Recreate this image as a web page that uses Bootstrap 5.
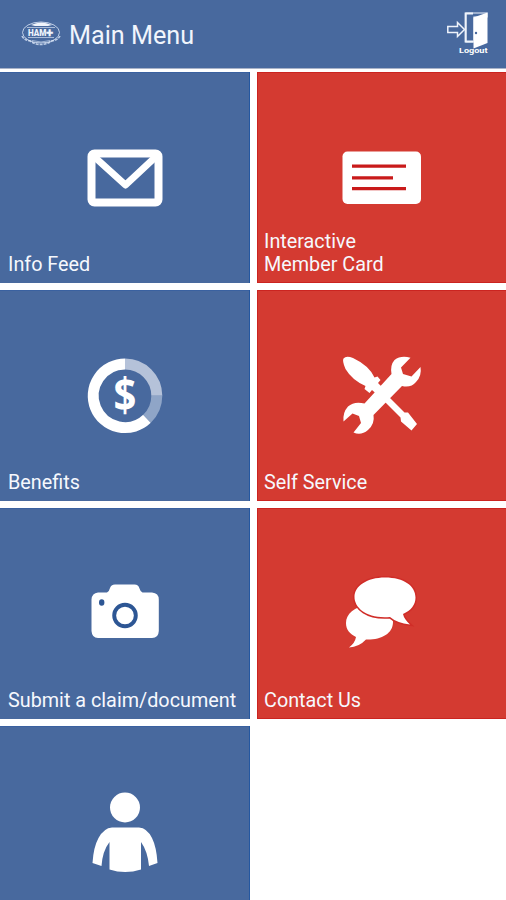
<!DOCTYPE html>
<html lang="en">
<head>
<meta charset="utf-8">
<meta name="viewport" content="width=device-width, initial-scale=1">
<title>Main Menu</title>
<link href="https://cdn.jsdelivr.net/npm/bootstrap@5.3.0/dist/css/bootstrap.min.css" rel="stylesheet">
<style>
body{font-family:Roboto,"Liberation Sans",sans-serif;background:#fff;height:900px;overflow:hidden}
.topbar{height:69px;background:#48699e;border-bottom:1px solid #a9b3c8;padding:0 16px 0 20px}
.topbar h1{font-size:25.2px;line-height:30px;color:#f1f5fc;margin:4px 0 0 7px}
.menu-grid{display:grid;grid-template-columns:250px 249px;grid-auto-rows:211px;gap:7px;margin-top:3px}
.tile{color:#f6f8fd;font-size:19.8px;line-height:23px;padding:55px 0 7px 7px}
.tile:hover{color:#fff}
.tile svg{margin-left:68px;flex:none}
.tile-blue{background:#48699e;box-shadow:inset -1px 0 #2457a0,inset 0 1px #3a61a0}
.tile-blue span{padding-left:1px}
.tile-red{background:#d43a31;box-shadow:inset 1px 1px #cb2420,inset 0 -1px #cb2420}
</style>
</head>
<body>
<header class="topbar d-flex align-items-center">
  <svg width="42" height="30" viewBox="20 20 42 30" fill="none" stroke="#dbe6f7" aria-hidden="true">
    <ellipse cx="41" cy="33.500" rx="18.500" ry="10.500" stroke-width="1" opacity=".8"/>
    <path d="M31 26Q41 21 52 26L48 27H35Z" fill="#f1f5fc" stroke="none"/>
    <path d="M27 28.500H55M28 38.500H54" opacity=".65"/>
    <text x="28" y="37" font-family="Roboto, sans-serif" font-weight="900" font-size="8.500" textLength="26" lengthAdjust="spacingAndGlyphs" fill="#edf3fc" stroke="none">HAM✚</text>
    <path d="M22 37Q24 41 30 42Q41 49 52 42Q58 41 60 37" stroke-width="1.600" stroke-dasharray="3 1" opacity=".8"/>
    <path d="M32 41.500Q41 44.500 50 41.500" opacity=".6"/>
  </svg>
  <h1 class="fw-normal">Main Menu</h1>
  <a href="#" class="ms-auto d-block" aria-label="Logout">
    <svg class="d-block" width="46" height="50" viewBox="444 9 46 50">
      <path d="M473 13.500H465.500V41.500H473" fill="none" stroke="#eef3fb" stroke-width="1.800"/>
      <path d="M466 13H487V17H474V42H466Z" fill="none" stroke="#eef3fb" stroke-width="1.200"/>
      <path d="M473.500 17.500L487.500 12.500V43L473.500 48.500Z" fill="#fff"/>
      <circle cx="476" cy="33" r="1.200" fill="#48699e"/>
      <path d="M447.800 26.500H457.500V22.500L464.500 29.500L457.500 36.500V32.500H447.800Z" fill="#48699e" stroke="#eef3fb" stroke-width="1.500"/>
      <text x="459" y="53" font-family="Roboto, sans-serif" font-size="7.500" font-weight="700" textLength="28.500" lengthAdjust="spacingAndGlyphs" fill="#fff">Logout</text>
    </svg>
  </a>
</header>
<main class="menu-grid">
  <a href="#" class="tile tile-blue d-flex flex-column text-decoration-none">
    <svg width="100" height="100" viewBox="75 127 100 100" fill="none" stroke="#fff">
      <rect x="91.500" y="153.500" width="67" height="49" rx="3" stroke-width="8"/>
      <path d="M94 156.500L125.500 185L156 156.500" stroke-width="7" stroke-linejoin="round"/>
    </svg>
    <span class="mt-auto">Info Feed</span>
  </a>
  <a href="#" class="tile tile-red d-flex flex-column text-decoration-none">
    <svg width="100" height="100" viewBox="332 127 100 100">
      <rect x="342.500" y="151.500" width="78.500" height="52.500" rx="5" fill="#fff"/>
      <path d="M352 166.200H406M352 177.800H393M352 188.700H406" stroke="#c91a1a" stroke-width="3.300"/>
    </svg>
    <span class="mt-auto">Interactive<br>Member Card</span>
  </a>
  <a href="#" class="tile tile-blue d-flex flex-column text-decoration-none">
    <svg width="100" height="100" viewBox="75 345 100 100">
      <g fill="none" stroke-width="11">
        <path d="M125 364A31.800 31.800 0 1 0 147 418.800" stroke="#fff"/>
        <path d="M125 364A31.800 31.800 0 0 1 156.800 395.800" stroke="#b5c2d9"/>
        <path d="M156.800 395.800A31.800 31.800 0 0 1 147 418.800" stroke="#8fa5c7"/>
      </g>
      <text transform="translate(125 412.200) scale(1 1.180)" text-anchor="middle" font-family="Open Sans, sans-serif" font-weight="700" font-size="40" fill="#fff">$</text>
    </svg>
    <span class="mt-auto">Benefits</span>
  </a>
  <a href="#" class="tile tile-red d-flex flex-column text-decoration-none">
    <svg width="100" height="100" viewBox="332 345 100 100" fill="#fff">
      <path d="M343.500 358.500Q346 355.500 353 358Q369 365.500 374.500 377.500L377.500 376.500L380.500 380L378 383L384 389L377.500 395L372 390L369.500 393L364.500 389L365.500 386Q352 380 345.500 369Q342 361 343.500 358.500Z"/>
      <path d="M384 401L388.500 396.500L404.500 412.500L408 412.500L417 424L411.500 430.500L401 421.500L400.500 417.500Z"/>
      <path d="M410.500 357.800Q401 355 394.500 360Q390 365 391.500 374L364.500 403.500Q354 401 348 406.500Q342.500 412.500 343.500 421.500L352.500 413.500L359 416L361 423L353.500 432.500Q361 436 368 430Q375 424 373.500 415L402 386Q411 388 416 382Q422 376 420.500 367L411.500 376.500L403 374L401 367.500Z"/>
    </svg>
    <span class="mt-auto">Self Service</span>
  </a>
  <a href="#" class="tile tile-blue d-flex flex-column text-decoration-none">
    <svg width="100" height="100" viewBox="75 563 100 100">
      <path d="M98 592.500H107Q109 592 109.800 588.500Q111 584.500 115 584.500H134.500Q138.500 584.500 139.500 588.500Q140.500 592 142.500 592.500H152Q158.800 593 158.800 599.500V631Q158.500 638 152 638H98Q92 638 91.500 631V599.500Q92 593 98 592.500Z" fill="#fff"/>
      <circle cx="125" cy="615.500" r="10.800" fill="none" stroke="#2d5694" stroke-width="3.900"/>
      <ellipse cx="101.700" cy="602.500" rx="2.700" ry="3.200" fill="#2d5694"/>
    </svg>
    <span class="mt-auto">Submit a claim/document</span>
  </a>
  <a href="#" class="tile tile-red d-flex flex-column text-decoration-none">
    <svg width="100" height="100" viewBox="332 563 100 100" fill="#fff">
      <path d="M369 604C354 607 346 614 346 623C346 630 350 634 356 637Q355 643 349 647.500Q359 647 366 639.500C381 640 393 634 393 622C393 612 383 604 369 604Z"/>
      <path d="M385 577.500C404 577.500 415.500 586 415.500 597.500C415.500 605 411 610.500 403 614Q404 619 410 624.500Q397 623 390 617C367 619 354.500 608 354.500 597C354.500 586 367 577.500 385 577.500Z" stroke="#d02d28" stroke-width="3" paint-order="stroke"/>
    </svg>
    <span class="mt-auto">Contact Us</span>
  </a>
  <a href="#" class="tile tile-blue d-flex flex-column text-decoration-none" aria-label="Profile">
    <svg width="100" height="100" viewBox="75 781 100 100" fill="#fff">
      <circle cx="125" cy="807.500" r="15"/>
      <path d="M112 827.500H139Q147 828 152 838Q156.500 847 157.500 863L149 866Q147.500 851 141 842V869.500Q125 874.500 109.500 869.500V842Q102.500 851 101.500 866L92.500 863Q93.500 847 98.500 838Q104 828 112 827.500Z"/>
    </svg>
  </a>
</main>
<script src="https://cdn.jsdelivr.net/npm/bootstrap@5.3.0/dist/js/bootstrap.bundle.min.js"></script>
</body>
</html>
